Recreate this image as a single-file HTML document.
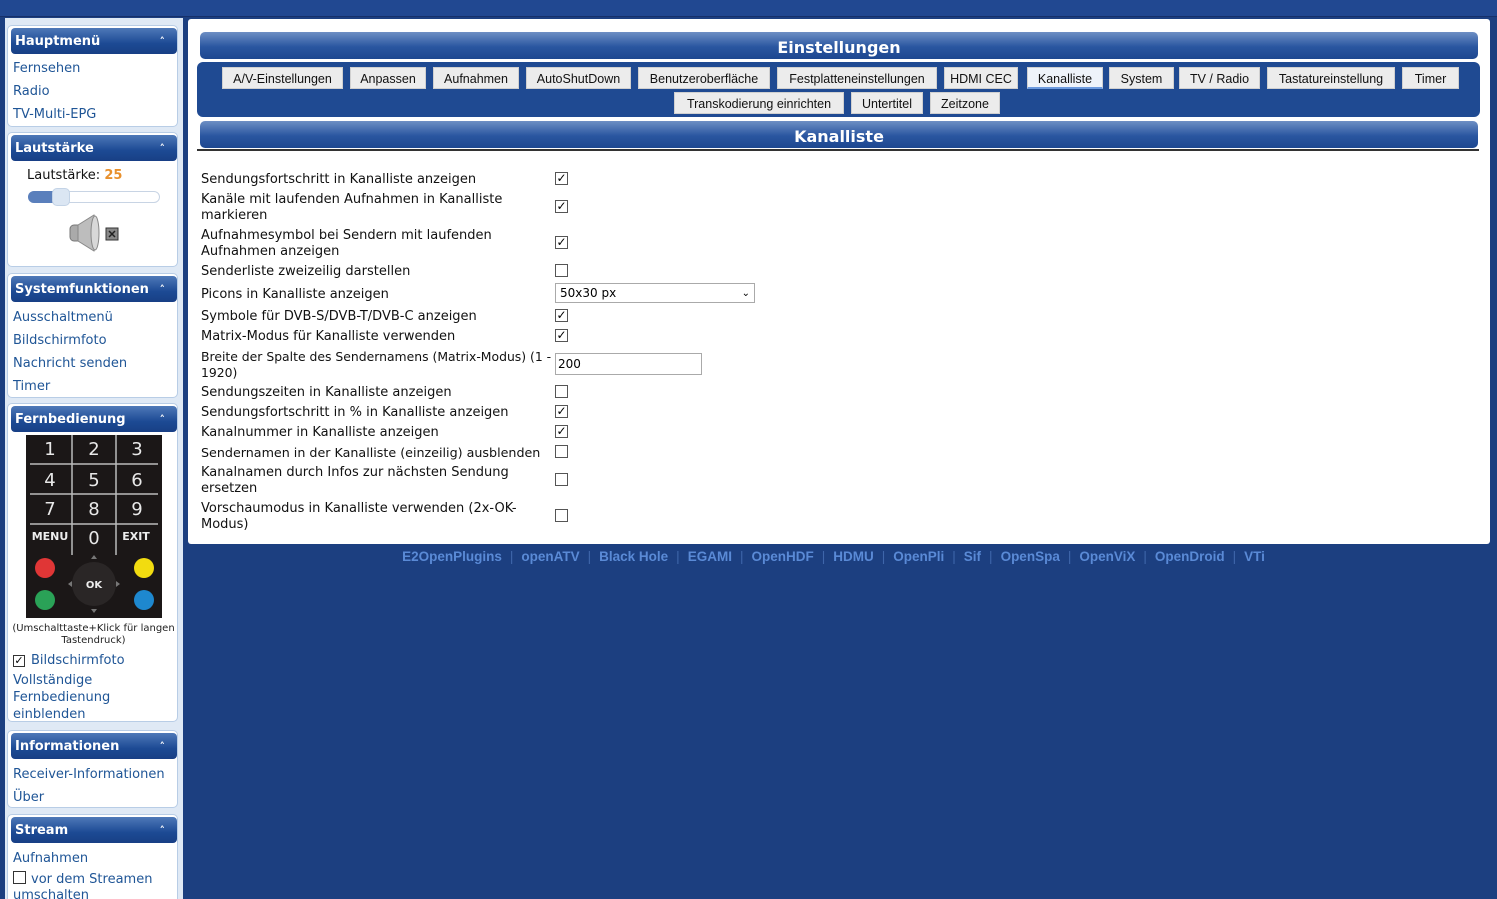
<!DOCTYPE html>
<html><head><meta charset="utf-8"><style>
*{margin:0;padding:0;box-sizing:border-box}
html,body{width:1497px;height:899px;overflow:hidden}
body{background:#1c3f80;font-family:"DejaVu Sans","Liberation Sans",sans-serif;position:relative}
.a{position:absolute}
.top{left:0;top:0;width:1497px;height:17px;background:#214891;border-bottom:1px solid #16306a}
.side{left:5px;top:18px;width:178px;height:881px;background:#dfe9f5;overflow:hidden}
.box{position:absolute;left:2px;width:171px;background:#fff;border:1px solid #b8cde6;border-radius:5px}
.hd{position:absolute;left:3px;width:166px;height:26px;border-radius:4px;background:linear-gradient(#4e78b8,#1c4a94 60%,#183f85);color:#fff;font-weight:bold;font-size:13px;line-height:28px;padding-left:4px}
.hd:after{content:"\02C4";position:absolute;right:12px;top:0;font-size:11px}
.lk{position:absolute;left:5px;color:#1f5596;font-size:13px;white-space:nowrap}
.main{left:188px;top:19px;width:1302px;height:525px;background:#fff;border-radius:3px}
.bar{position:absolute;left:12px;width:1278px;height:27px;border-radius:5px;background:linear-gradient(#6e8fc4,#2a56a0 55%,#1d4790);color:#fff;font-weight:bold;font-size:16px;text-align:center;line-height:31px}
.tabs{position:absolute;left:9px;top:43px;width:1283px;height:55px;border-radius:6px;background:#1f4a92}
.bt{position:absolute;height:22px;background:#ececec;border:1px solid #d0d0d0;font-family:"Liberation Sans",sans-serif;font-size:12.5px;color:#111;line-height:23px;text-align:center}
.lb{position:absolute;left:13px;width:348px;font-size:13px;line-height:16px;color:#111}
.cb{position:absolute;left:367px;width:13px;height:13px;border:1px solid #555;background:#fff;font-size:12px;line-height:11px;text-align:center;color:#000;font-weight:bold}
.ft{left:0;top:549px;width:1497px;text-align:center;padding-left:170px;font-family:"Liberation Sans",sans-serif;font-weight:bold;font-size:13.5px;color:#5a8ad6}
.ft span{color:#3e66aa;margin:0 8px;font-weight:normal}
</style></head><body>
<div class="a top"></div>
<div class="a side">
 <div class="box" style="top:7px;height:102px">
  <div class="hd" style="top:2px">Hauptmenü</div>
  <div class="lk" style="top:35px">Fernsehen</div>
  <div class="lk" style="top:58px">Radio</div>
  <div class="lk" style="top:81px">TV-Multi-EPG</div>
 </div>
 <div class="box" style="top:114px;height:135px">
  <div class="hd" style="top:2px">Lautstärke</div>
  <div class="lk" style="left:19px;top:35px;color:#111">Lautstärke: <b style="color:#e8902c">25</b></div>
  <div class="a" style="left:20px;top:58px;width:132px;height:12px;border:1px solid #c8d4e4;border-radius:6px;background:#fff"></div>
  <div class="a" style="left:20px;top:58px;width:28px;height:12px;border-radius:6px 0 0 6px;background:#5a7fbc"></div>
  <div class="a" style="left:44px;top:55px;width:18px;height:18px;border-radius:5px;background:#dbe6f3;border:1px solid #c3d3e6"></div>
  <svg class="a" style="left:60px;top:80px" width="52" height="40" viewBox="0 0 52 40"><rect x="2" y="12" width="12" height="16" rx="4" fill="#aaa" stroke="#777"/><path d="M10 12 L26 2 Q32 20 26 38 L10 28 Z" fill="#bdbdbd" stroke="#888"/><ellipse cx="27" cy="20" rx="4" ry="17" fill="#d8d8d8" stroke="#888"/><rect x="38" y="15" width="12" height="12" fill="#888" stroke="#333"/><path d="M41 18l6 6M47 18l-6 6" stroke="#222" stroke-width="1.5"/></svg>
 </div>
 <div class="box" style="top:255px;height:125px">
  <div class="hd" style="top:2px">Systemfunktionen</div>
  <div class="lk" style="top:36px">Ausschaltmenü</div>
  <div class="lk" style="top:59px">Bildschirmfoto</div>
  <div class="lk" style="top:82px">Nachricht senden</div>
  <div class="lk" style="top:105px">Timer</div>
 </div>
 <div class="box" style="top:385px;height:319px">
  <div class="hd" style="top:2px">Fernbedienung</div>
  <svg class="a" style="left:18px;top:31px" width="136" height="183" viewBox="0 0 136 183">
   <rect width="136" height="183" fill="#1b1717"/>
   <g stroke="#bbb" stroke-width="1.5"><line x1="46" y1="0" x2="46" y2="120"/><line x1="90" y1="0" x2="90" y2="120"/><line x1="4" y1="29" x2="132" y2="29"/><line x1="4" y1="59" x2="132" y2="59"/><line x1="4" y1="89" x2="132" y2="89"/></g>
   <g fill="#e8e8e8" font-family="DejaVu Sans" font-size="18" text-anchor="middle"><text x="24" y="20">1</text><text x="68" y="20">2</text><text x="111" y="20">3</text><text x="24" y="51">4</text><text x="68" y="51">5</text><text x="111" y="51">6</text><text x="24" y="80">7</text><text x="68" y="80">8</text><text x="111" y="80">9</text><text x="68" y="109">0</text></g>
   <g fill="#eee" font-family="DejaVu Sans" font-weight="bold" font-size="11" text-anchor="middle"><text x="24" y="105">MENU</text><text x="110" y="105">EXIT</text></g>
   <circle cx="68" cy="149" r="22" fill="#2a2626"/>
   <g fill="#777"><path d="M68 120l-3 4h6z"/><path d="M68 178l-3-4h6z"/><path d="M42 149l4-3v6z"/><path d="M94 149l-4-3v6z"/></g>
   <text x="68" y="153" fill="#eee" font-family="DejaVu Sans" font-weight="bold" font-size="10" text-anchor="middle">OK</text>
   <circle cx="19" cy="133" r="10" fill="#e03636"/><circle cx="118" cy="133" r="10" fill="#f2dc10"/>
   <circle cx="19" cy="165" r="10" fill="#2aa257"/><circle cx="118" cy="165" r="10" fill="#1e88cf"/>
  </svg>
  <div class="a" style="left:0;top:219px;width:171px;text-align:center;font-size:10px;line-height:12px;color:#222">(Umschalttaste+Klick für langen Tastendruck)</div>
  <div class="a" style="left:5px;top:251px;width:12px;height:12px;border:1px solid #333;font-size:11px;line-height:10px;text-align:center;font-weight:bold">✓</div>
  <div class="lk" style="left:23px;top:249px">Bildschirmfoto</div>
  <div class="lk" style="top:268px;line-height:17px;white-space:normal;width:120px">Vollständige Fernbedienung einblenden</div>
 </div>
 <div class="box" style="top:712px;height:78px">
  <div class="hd" style="top:2px">Informationen</div>
  <div class="lk" style="top:36px">Receiver-Informationen</div>
  <div class="lk" style="top:59px">Über</div>
 </div>
 <div class="box" style="top:796px;height:120px">
  <div class="hd" style="top:2px">Stream</div>
  <div class="lk" style="top:36px">Aufnahmen</div>
  <div class="a" style="left:5px;top:56px;width:13px;height:13px;border:1px solid #333"></div>
  <div class="lk" style="left:23px;top:57px">vor dem Streamen</div>
  <div class="lk" style="top:73px">umschalten</div>
 </div>
</div>
<div class="a main">
 <div class="bar" style="top:13px">Einstellungen</div>
 <div class="tabs">
  <div class="bt" style="left:25px;top:5px;width:121px">A/V-Einstellungen</div>
  <div class="bt" style="left:153px;top:5px;width:76px">Anpassen</div>
  <div class="bt" style="left:236px;top:5px;width:86px">Aufnahmen</div>
  <div class="bt" style="left:329px;top:5px;width:105px">AutoShutDown</div>
  <div class="bt" style="left:441px;top:5px;width:132px">Benutzeroberfläche</div>
  <div class="bt" style="left:580px;top:5px;width:160px">Festplatteneinstellungen</div>
  <div class="bt" style="left:747px;top:5px;width:74px">HDMI CEC</div>
  <div class="bt" style="left:830px;top:5px;width:76px;background:#eef3fa;border-bottom:2px solid #6c9ade">Kanalliste</div>
  <div class="bt" style="left:912px;top:5px;width:65px">System</div>
  <div class="bt" style="left:982px;top:5px;width:81px">TV / Radio</div>
  <div class="bt" style="left:1070px;top:5px;width:128px">Tastatureinstellung</div>
  <div class="bt" style="left:1205px;top:5px;width:57px">Timer</div>
  <div class="bt" style="left:477px;top:30px;width:170px">Transkodierung einrichten</div>
  <div class="bt" style="left:654px;top:30px;width:72px">Untertitel</div>
  <div class="bt" style="left:733px;top:30px;width:70px">Zeitzone</div>
 </div>
 <div class="bar" style="top:102px">Kanalliste</div>
 <div class="a" style="left:9px;top:130px;width:1282px;height:2px;background:#333"></div>
 <div class="lb" style="top:153px">Sendungsfortschritt in Kanalliste anzeigen</div><div class="cb" style="top:153px">✓</div>
 <div class="lb" style="top:173px">Kanäle mit laufenden Aufnahmen in Kanalliste markieren</div><div class="cb" style="top:181px">✓</div>
 <div class="lb" style="top:209px">Aufnahmesymbol bei Sendern mit laufenden Aufnahmen anzeigen</div><div class="cb" style="top:217px">✓</div>
 <div class="lb" style="top:245px">Senderliste zweizeilig darstellen</div><div class="cb" style="top:245px"></div>
 <div class="lb" style="top:268px">Picons in Kanalliste anzeigen</div>
 <div class="a" style="left:367px;top:264px;width:200px;height:20px;border:1px solid #aaa;font-size:12px;line-height:19px;padding-left:4px">50x30 px<span style="position:absolute;right:4px;font-size:10px">⌄</span></div>
 <div class="lb" style="top:290px">Symbole für DVB-S/DVB-T/DVB-C anzeigen</div><div class="cb" style="top:290px">✓</div>
 <div class="lb" style="top:310px">Matrix-Modus für Kanalliste verwenden</div><div class="cb" style="top:310px">✓</div>
 <div class="lb" style="top:330px;width:352px;font-size:12.4px">Breite der Spalte des Sendernamens (Matrix-Modus) (1 - 1920)</div>
 <div class="a" style="left:367px;top:334px;width:147px;height:22px;border:1px solid #aaa;font-size:12px;line-height:21px;padding-left:2px">200</div>
 <div class="lb" style="top:366px">Sendungszeiten in Kanalliste anzeigen</div><div class="cb" style="top:366px"></div>
 <div class="lb" style="top:386px">Sendungsfortschritt in % in Kanalliste anzeigen</div><div class="cb" style="top:386px">✓</div>
 <div class="lb" style="top:406px">Kanalnummer in Kanalliste anzeigen</div><div class="cb" style="top:406px">✓</div>
 <div class="lb" style="top:426px;font-size:12.7px">Sendernamen in der Kanalliste (einzeilig) ausblenden</div><div class="cb" style="top:426px"></div>
 <div class="lb" style="top:446px;width:320px">Kanalnamen durch Infos zur nächsten Sendung ersetzen</div><div class="cb" style="top:454px"></div>
 <div class="lb" style="top:482px;width:320px">Vorschaumodus in Kanalliste verwenden (2x-OK-Modus)</div><div class="cb" style="top:490px"></div>
</div>
<div class="a ft">E2OpenPlugins<span>|</span>openATV<span>|</span>Black Hole<span>|</span>EGAMI<span>|</span>OpenHDF<span>|</span>HDMU<span>|</span>OpenPli<span>|</span>Sif<span>|</span>OpenSpa<span>|</span>OpenViX<span>|</span>OpenDroid<span>|</span>VTi</div>
</body></html>
